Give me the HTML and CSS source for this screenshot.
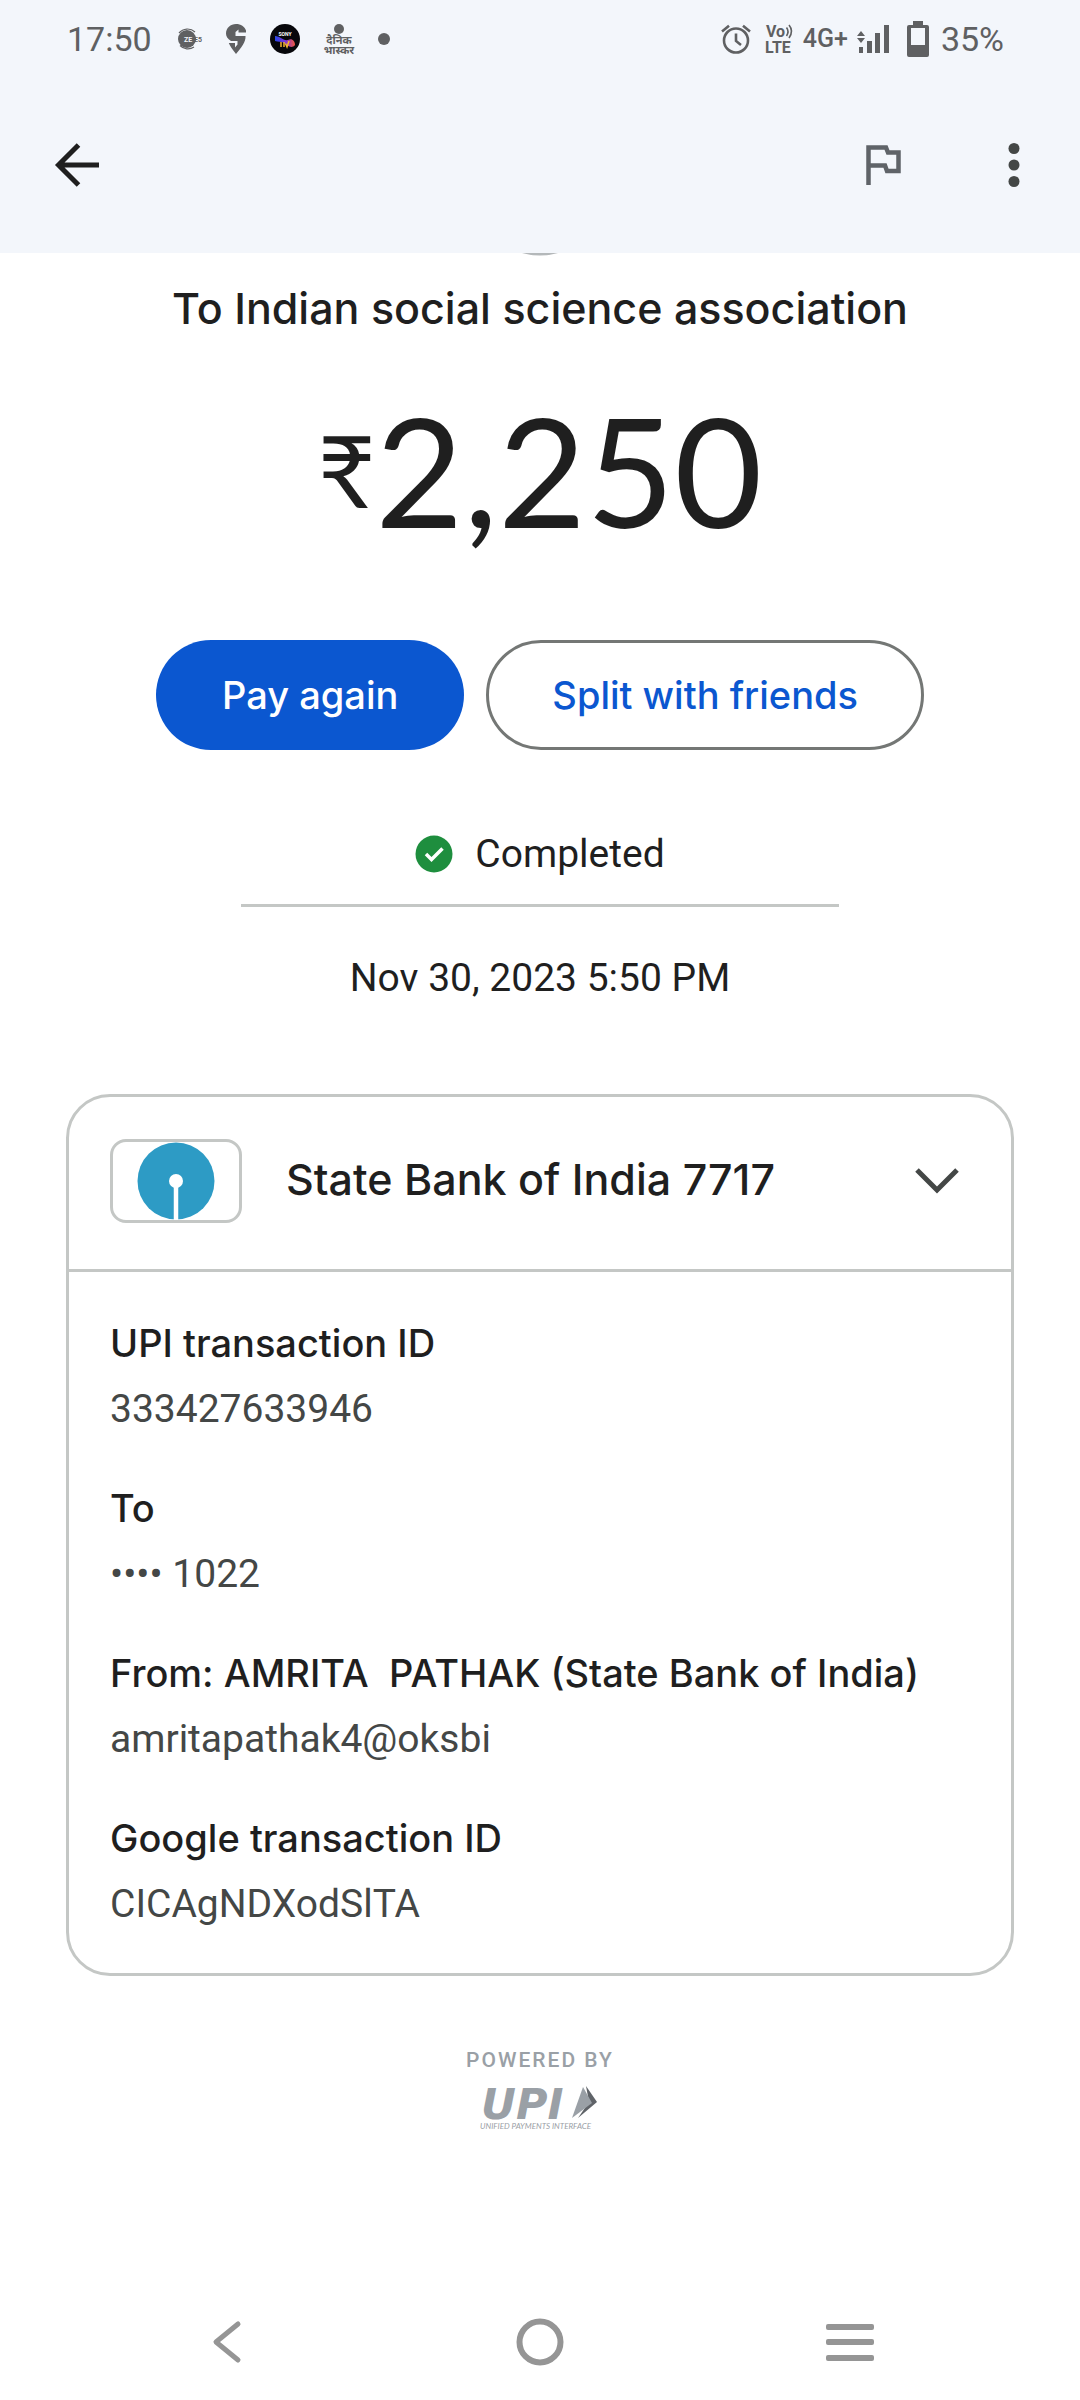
FILE: index.html
```html
<!DOCTYPE html>
<html lang="en">
<head>
<meta charset="utf-8">
<meta name="viewport" content="width=device-width, initial-scale=1">
<title>Transaction details</title>
<link rel="stylesheet" href="styles.css">
</head>
<body>
<header class="top">
  <div class="status">
    <div class="status-left">
      <span class="clock">17:50</span>
      <svg class="zee" width="26" height="24" viewBox="0 0 26 24"><circle cx="11" cy="12" r="9" fill="#5f6062"/><path d="M3 6A11 11 0 0 1 19 5M4 18.500A11 11 0 0 0 18 20" fill="none" stroke="#5f6062" stroke-width="1.200"/><text x="8" y="14.500" font-size="7" font-weight="700" fill="#f3f6fb">ZE</text><text x="18" y="14.500" font-size="7" font-weight="700" fill="#5f6062">E5</text></svg>
      <svg width="20" height="30" viewBox="0 0 20 30"><path d="M10 30C6 25 4 22 2.800 19H9V23.500L11.500 20.500V17H5C1.500 15 0 12 0 9.500C0 4 4.500 0 10 0C15 0 18.500 2.500 20 6.500V8.500H12.500V5.500L9.500 8V12H19.500C20 18 15 24 10 30Z" fill="#5f6062"/></svg>
      <svg class="sony" width="30" height="30" viewBox="0 0 30 30"><defs><linearGradient id="liv"><stop offset="0" stop-color="#2747e8"/><stop offset=".5" stop-color="#7b35dc"/><stop offset="1" stop-color="#f2583e"/></linearGradient></defs><circle cx="15" cy="15" r="15" fill="#07070b"/><path d="M5 12C10 12 13 17 18 16C22 14 25 17 25 21C22 25 17 22 14 19C11 17 8 18 5 17Z" fill="url(#liv)"/><text x="15" y="12" text-anchor="middle" font-size="5" font-weight="700" fill="#fff">SONY</text><path d="M11 18V23M14 18V23M15.500 19.500L17 23L19 17" fill="none" stroke="#f8b72d" stroke-width="1.500"/></svg>
      <svg class="bhaskar" width="30" height="32" viewBox="0 0 30 32"><circle cx="15" cy="6" r="5" fill="#5f6062"/><text x="15" y="21" text-anchor="middle" font-size="11" font-weight="700" fill="#5f6062">दैनिक</text><text x="15" y="31" text-anchor="middle" font-size="11" font-weight="700" fill="#5f6062">भास्कर</text></svg>
      <span class="more-dot"></span>
    </div>
    <div class="status-right">
      <svg class="alarm" width="30" height="30" viewBox="0 0 30 30" fill="none" stroke="#5f6062" stroke-width="2.600"><circle cx="15" cy="16.500" r="12"/><path d="M15 9.500V17L20 21M1 7.500L8 1.800M29 7.500L22 1.800"/></svg>
      <svg class="volte" width="28" height="30" viewBox="0 0 28 30"><text x="0" y="13" font-size="16" font-weight="700" fill="#5f6062">Vo</text><path d="M20.500 3.500Q23.500 7.500 20.500 12M23 1Q28 7 23 14" fill="none" stroke="#5f6062" stroke-width="1.600"/><text x="-1" y="29" font-size="16" font-weight="700" fill="#5f6062">LTE</text></svg>
      <span class="network">4G+</span>
      <svg class="signal" width="32" height="28" viewBox="0 0 32 28" fill="#5f6062"><path d="M4 6L8 11H0ZM4 18L0 13H8ZM2 22H6V28H2ZM10 16H15V28H10ZM18 8H23V28H18ZM27 0H32V28H27Z"/></svg>
      <svg class="battery" width="22" height="36" viewBox="0 0 22 36"><path d="M6 0H16V4H20Q22 4 22 6V34Q22 36 20 36H2Q0 36 0 34V6Q0 4 2 4H6ZM4 7V24H18V7Z" fill="#5f6062" fill-rule="evenodd"/></svg>
      <span class="clock">35%</span>
    </div>
  </div>
  <div class="appbar">
    <button class="icon-btn" aria-label="Back"><svg width="44" height="44" viewBox="0 0 44 44" fill="none" stroke="#1f1f1f" stroke-width="5"><path d="M23.500 2L3.500 22L23.500 42M4 22H44"/></svg></button>
    <div class="actions">
      <button class="icon-btn" aria-label="Report"><svg width="36" height="40" viewBox="0 0 36 40" fill="none" stroke="#5f6368" stroke-width="4.500"><path d="M2.500 40V2.500H20L22 7.500H32.500V26H21L19 20.500H3"/></svg></button>
      <button class="icon-btn" aria-label="More options"><svg width="12" height="44" viewBox="0 0 12 44" fill="#444746"><circle cx="6" cy="5.500" r="5.500"/><circle cx="6" cy="22" r="5.500"/><circle cx="6" cy="38.500" r="5.500"/></svg></button>
    </div>
  </div>
</header>
<main class="content">
  <svg class="avatar-edge" width="36" height="3" viewBox="0 0 36 3"><path d="M0 0H36Q18 5 0 0Z" fill="#b4b8ba"/></svg>
  <h1 class="payee">To Indian social science association</h1>
  <p class="amount"><span class="rupee">₹</span>2,250</p>
  <div class="buttons">
    <button class="pill pill-main">Pay again</button>
    <button class="pill pill-line">Split with friends</button>
  </div>
  <div class="state">
    <svg width="38" height="38" viewBox="0 0 38 38"><circle cx="19" cy="19" r="18.500" fill="#1e8e3e"/><path d="M11 19L16.500 24.500L27.500 13.500" fill="none" stroke="#fff" stroke-width="3.500"/></svg>
    <span>Completed</span>
  </div>
  <p class="date">Nov 30, 2023 5:50 PM</p>
  <section class="card">
    <button class="bank">
      <span class="bank-logo"><svg width="78" height="78" viewBox="0 0 78 78"><circle cx="39" cy="39" r="38.500" fill="#2d9bc5"/><circle cx="39" cy="39" r="7" fill="#fff"/><path d="M39 39V78" stroke="#fff" stroke-width="4.500"/></svg></span>
      <span class="bank-name">State Bank of India 7717</span>
      <svg width="44" height="26" viewBox="0 0 44 26"><path d="M2 2L22 22L42 2" fill="none" stroke="#444746" stroke-width="5"/></svg>
    </button>
    <dl class="details">
      <div><dt>UPI transaction ID</dt><dd>333427633946</dd></div>
      <div><dt>To</dt><dd>•••• 1022</dd></div>
      <div><dt>From: AMRITA&nbsp; PATHAK (State Bank of India)</dt><dd>amritapathak4@oksbi</dd></div>
      <div><dt>Google transaction ID</dt><dd>CICAgNDXodSlTA</dd></div>
    </dl>
  </section>
  <footer class="powered">
    <span class="powered-by">POWERED BY</span>
    <svg class="upi" width="120" height="46" viewBox="0 0 120 46"><text class="upi-mark" x="1" y="33">UPI</text><path d="M106 0L117 16L98 32L109 16Z" fill="#5f6368"/><path d="M103 1L112 17L92 32Z" fill="#9aa0a6"/><text class="upi-tag" x="0" y="43">UNIFIED PAYMENTS INTERFACE</text></svg>
  </footer>
</main>
<nav class="navbar">
  <button class="icon-btn" aria-label="Back"><svg width="48" height="48" viewBox="0 0 48 48"><path d="M32 6L10 24L32 42" fill="none" stroke="#959595" stroke-width="5" stroke-linecap="round" stroke-linejoin="round"/></svg></button>
  <button class="icon-btn" aria-label="Home"><svg width="48" height="48" viewBox="0 0 48 48"><circle cx="24" cy="24" r="20.500" fill="none" stroke="#959595" stroke-width="6"/></svg></button>
  <button class="icon-btn" aria-label="Recent apps"><svg width="48" height="48" viewBox="0 0 48 48" fill="#959595"><rect y="6" width="48" height="6" rx="2"/><rect y="21" width="48" height="6" rx="2"/><rect y="37" width="48" height="6" rx="2"/></svg></button>
</nav>
</body>
</html>
```
FILE: styles.css
```css
* { box-sizing: border-box; margin: 0; padding: 0; }
body {
  min-height: 100vh;
  display: flex;
  flex-direction: column;
  background: #fff;
  color: #1f1f1f;
  font-family: Inter, "Noto Sans", sans-serif;
  font-size: 38px;
}
button { border: 0; background: none; font: inherit; color: inherit; cursor: pointer; }
svg { display: block; flex: none; overflow: visible; }
.top { background: #f3f6fb; }
.status {
  height: 77px;
  padding: 0 76px 0 67px;
  display: flex;
  align-items: center;
  justify-content: space-between;
  font-family: Roboto, "Noto Sans", sans-serif;
  color: #5f6062;
}
.status-left, .status-right { display: flex; align-items: center; }
.status-left { gap: 24px; }
.status-right { gap: 9px; }
.clock { font-size: 34px; line-height: 40px; }
.network { font-size: 25px; line-height: 32px; font-weight: 500; }
.alarm { margin-right: 6px; }
.battery { margin: 0 3px 0 9px; }
.more-dot { width: 12px; height: 12px; border-radius: 50%; background: #5f6062; }
.appbar {
  height: 176px;
  display: flex;
  align-items: center;
  justify-content: space-between;
  padding: 0 60px 0 55px;
}
.actions { display: flex; align-items: center; gap: 106px; }
.icon-btn { display: flex; }
.content { flex: 1; display: flex; flex-direction: column; align-items: center; padding: 0 66px; }
.payee { margin-top: 22px; font-size: 43px; font-weight: 500; line-height: 60px; }
.amount { margin-top: 43px; font-family: Lato, Inter, sans-serif; font-size: 152px; line-height: 176px; display: flex; }
.rupee { font-size: 100px; line-height: 176px; }
.buttons { margin-top: 83px; display: flex; gap: 22px; }
.pill { height: 110px; border-radius: 55px; padding: 0 66px; font-weight: 500; }
.pill-main { background: #0b57d0; color: #fff; }
.pill-line { padding: 0 63px; border: 3px solid #747775; color: #0b57d0; }
.state {
  width: 63%;
  margin-top: 80px;
  padding-bottom: 26px;
  border-bottom: 3px solid #c4c7c5;
  display: flex;
  justify-content: center;
  align-items: center;
  gap: 22px;
}
.state, .date { font-family: Roboto, sans-serif; font-size: 39px; line-height: 48px; }
.date { margin-top: 47px; }
.card { width: 100%; margin-top: 92px; border: 3px solid #c4c7c5; border-radius: 44px; }
.bank {
  width: 100%;
  height: 175px;
  padding: 0 52px 4px 41px;
  border-bottom: 3px solid #c4c7c5;
  display: flex;
  align-items: center;
  text-align: left;
}
.bank-logo {
  width: 132px;
  height: 84px;
  border: 3px solid #c4c7c5;
  border-radius: 16px;
  display: flex;
  justify-content: center;
}
.bank-name { flex: 1; margin-left: 44px; padding-bottom: 4px; font-size: 43px; font-weight: 500; }
.details { padding: 38px 41px 36px; display: flex; flex-direction: column; gap: 33px; line-height: 66px; }
.details dt { font-weight: 500; }
.details dd { font-family: Roboto, sans-serif; font-size: 39px; color: #444746; }
.powered { margin-top: 68px; display: flex; flex-direction: column; align-items: center; gap: 10px; }
.powered-by { font: 500 21px/32px Roboto, sans-serif; letter-spacing: 2px; color: #9aa0a6; }
.upi { fill: #9aa0a6; }
.upi-mark { font: italic 700 43px "DejaVu Sans", sans-serif; }
.upi-tag { font: italic 8px Lato, sans-serif; }
.navbar { height: 116px; display: flex; justify-content: space-between; align-items: center; padding: 0 206px; }
```
